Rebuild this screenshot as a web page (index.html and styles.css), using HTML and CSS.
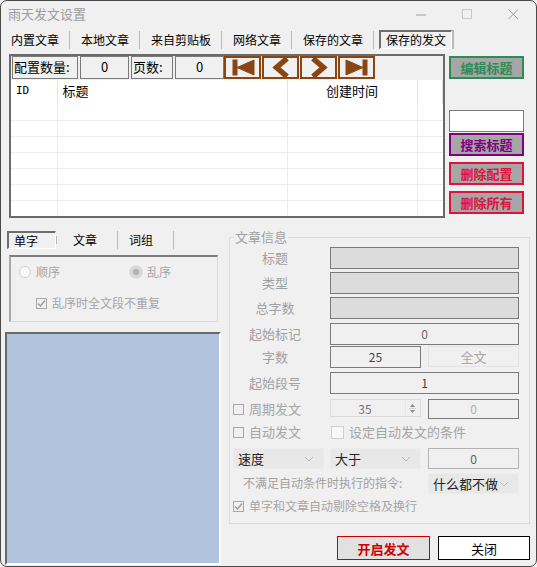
FILE: index.html
```html
<!DOCTYPE html>
<html lang="zh-CN">
<head>
<meta charset="UTF-8">
<title>雨天发文设置</title>
<link rel="stylesheet" href="styles.css">
</head>
<body>
<div class="window">

    <div class="titlebar">
        <span class="title">雨天发文设置</span>
        <div class="winctl">
            <span><svg width="11" height="11"><line x1="0" y1="6" x2="10" y2="6" stroke="#a0a0a0"/></svg></span>
            <span><svg width="11" height="11"><rect x="0.5" y="0.5" width="9" height="9" fill="none" stroke="#c8c8c8"/></svg></span>
            <span><svg width="11" height="11"><path d="M0.5 0.5 L10 10 M10 0.5 L0.5 10" stroke="#a0a0a0"/></svg></span>
        </div>
    </div>

    <div class="tabs">
        <span class="tab">内置文章</span>
        <span class="tab">本地文章</span>
        <span class="tab">来自剪贴板</span>
        <span class="tab">网络文章</span>
        <span class="tab">保存的文章</span>
        <span class="tab active">保存的发文</span>
    </div>

    <div class="main">
        <div class="listpanel">
            <div class="toprow">
                <span class="cell c-count">配置数量:</span>
                <span class="cell c-val">0</span>
                <span class="cell c-page">页数:</span>
                <span class="cell c-val">0</span>
                <div class="navs">
                    <button class="nav"><svg width="32" height="19"><rect x="6" y="2" width="4" height="15"/><polygon points="10,9.5 27,2 27,17"/></svg></button>
                    <button class="nav"><svg width="32" height="19"><polyline points="22,0.5 11.5,9.5 22,18.5" fill="none" stroke-width="5.5"/></svg></button>
                    <button class="nav"><svg width="32" height="19"><polyline points="10,0.5 20.5,9.5 10,18.5" fill="none" stroke-width="5.5"/></svg></button>
                    <button class="nav"><svg width="32" height="19"><polygon points="5,2 22,9.5 5,17"/><rect x="22" y="2" width="4" height="15"/></svg></button>
                </div>
            </div>
            <table class="grid">
                <tr class="head"><td class="mono">ID</td><td>标题</td><td class="center">创建时间</td><td></td></tr>
                <tr><td></td><td></td><td></td><td></td></tr>
                <tr><td></td><td></td><td></td><td></td></tr>
                <tr><td></td><td></td><td></td><td></td></tr>
                <tr><td></td><td></td><td></td><td></td></tr>
                <tr><td></td><td></td><td></td><td></td></tr>
                <tr><td></td><td></td><td></td><td></td></tr>
                <tr class="last"><td></td><td></td><td></td><td></td></tr>
            </table>
        </div>

        <div class="sidebtns">
            <button class="sbtn green">编辑标题</button>
            <input class="search" type="text">
            <button class="sbtn purple">搜索标题</button>
            <button class="sbtn red gap">删除配置</button>
            <button class="sbtn red gap">删除所有</button>
        </div>
    </div>

    <div class="lower">
        <div class="leftcol">
            <div class="subtabs">
                <span class="stab active">单字</span>
                <span class="stab">文章</span>
                <span class="stab">词组</span>
            </div>
            <div class="optbox">
                <div class="radios">
                    <span class="opt"><i class="radio"></i>顺序</span>
                    <span class="opt"><i class="radio on"></i>乱序</span>
                </div>
                <span class="opt chk-indent"><i class="check on"><svg width="9" height="9"><polyline points="1,4.5 3.5,7 8,1.5" fill="none" stroke="#9a9a9a" stroke-width="1.3"/></svg></i>乱序时全文段不重复</span>
            </div>
            <div class="preview"></div>
        </div>

        <div class="rightcol">
            <fieldset class="info">
                <legend>文章信息</legend>
                <div class="form">
                    <span class="lbl">标题</span><span class="field dark span3"></span>
                    <span class="lbl">类型</span><span class="field dark span3"></span>
                    <span class="lbl">总字数</span><span class="field dark span3"></span>
                    <span class="lbl">起始标记</span><span class="field span3 grey">0</span>
                    <span class="lbl">字数</span><span class="field">25</span><span class="flat">全文</span>
                    <span class="lbl">起始段号</span><span class="field span3">1</span>
                    <span class="opt lbl-left"><i class="check"></i>周期发文</span>
                    <span class="spin"><span class="spinval">35</span><span class="arrows"><svg width="9" height="13"><polygon points="4.5,2 7,5 2,5" fill="#8a8a8a"/><line x1="1" y1="6.5" x2="8" y2="6.5" stroke="#d0d0d0"/><polygon points="2,8 7,8 4.5,11" fill="#8a8a8a"/></svg></span></span>
                    <span class="field light">0</span>
                    <span class="opt lbl-left"><i class="check"></i>自动发文</span>
                    <span class="opt wide"><i class="check box"></i>设定自动发文的条件</span>
                    <span class="select first">速度<svg width="10" height="6"><polyline points="1,1 5,5 9,1" fill="none" stroke="#b8b8b8"/></svg></span>
                    <span class="select">大于<svg width="10" height="6"><polyline points="1,1 5,5 9,1" fill="none" stroke="#b8b8b8"/></svg></span>
                    <span class="field mid">0</span>
                    <span class="note">不满足自动条件时执行的指令:</span>
                    <span class="select">什么都不做<svg width="10" height="6"><polyline points="1,1 5,5 9,1" fill="none" stroke="#b8b8b8"/></svg></span>
                    <span class="opt full"><i class="check on"><svg width="9" height="9"><polyline points="1,4.5 3.5,7 8,1.5" fill="none" stroke="#9a9a9a" stroke-width="1.3"/></svg></i>单字和文章自动剔除空格及换行</span>
                </div>
            </fieldset>
            <div class="actions">
                <button class="btn-start">开启发文</button>
                <button class="btn-close">关闭</button>
            </div>
        </div>
    </div>

</div>
</body>
</html>
```

FILE: styles.css
```css
* {
    box-sizing: border-box;
}
body {
    margin: 0;
    background: #f0f0f0;
    font-family: "Noto Sans CJK SC", "Noto Sans", sans-serif;
    font-size: 12px;
    color: #000;
}
button, input {
    font-family: inherit;
    font-size: 12px;
    margin: 0;
    padding: 0;
}
.window {
    width: 537px;
    height: 567px;
    border: 1px solid #4a4a4a;
    border-radius: 7px;
    background: #f0f0f0;
    overflow: hidden;
}

/* title bar */
.titlebar {
    height: 26px;
    display: flex;
    align-items: center;
    justify-content: space-between;
    padding-left: 7px;
    color: #9c9c9c;
    line-height: 16px;
    font-size: 13px;
}
.winctl {
    display: flex;
}
.winctl span {
    width: 46px;
    display: flex;
    justify-content: center;
}

/* top tabs */
.tabs {
    display: flex;
    align-items: center;
    height: 23px;
    margin-top: 1px;
}
.tab {
    padding: 0 10px 0 11px;
    border-right: 1px solid #b9b9b9;
    line-height: 18px;
}
.tab:first-child {
    padding-left: 10px;
}
.tab.active {
    margin-left: 5px;
    padding: 0 5px;
    line-height: 16px;
    border-top: 2px solid #6e6e6e;
    border-left: 2px solid #6e6e6e;
    border-right: 1px solid #fff;
    border-bottom: 1px solid #fff;
    box-shadow: 2px 0 0 #b9b9b9;
}

/* list panel */
.main {
    display: flex;
    margin-top: 3px;
    padding-left: 8px;
}
.listpanel {
    width: 436px;
    height: 164px;
    border: 2px solid #6b6b6b;
    background: #fff;
    display: flex;
    flex-direction: column;
}
.toprow {
    display: flex;
    height: 24px;
    background: #f0f0f0;
    padding: 0 0 1px 1px;
    gap: 2px;
    align-items: stretch;
    font-size: 13px;
}
.cell {
    border: 1px solid #7a7a7a;
    line-height: 20px;
    text-align: center;
}
.c-count {
    width: 66px;
    text-align: left;
    padding-left: 1px;
}
.c-val {
    width: 49px;
}
.c-page {
    width: 42px;
    text-align: left;
    padding-left: 1px;
}
.navs {
    display: flex;
    gap: 1px;
    margin-left: -2px;
}
.nav {
    width: 37px;
    height: 23px;
    border: 2px solid #8b4513;
    background: #f0f0f0;
    display: flex;
    align-items: center;
    justify-content: center;
    fill: #8b4513;
    stroke: #8b4513;
}
.nav svg {
    display: block;
}
.grid {
    border-collapse: collapse;
    width: 100%;
    table-layout: fixed;
}
.grid td {
    height: 16px;
    padding: 0;
    border-bottom: 1px solid #ececec;
    border-right: 1px solid #ececec;
}
.grid td:nth-child(1) {
    width: 46px;
}
.grid td:nth-child(2) {
    width: 230px;
}
.grid td:nth-child(3) {
    width: 130px;
}
.grid td:last-child {
    border-right: none;
}
.grid .head td {
    height: 24px;
    border-bottom: none;
    border-right: 1px solid #e3e3e3;
    padding-left: 5px;
    vertical-align: top;
    line-height: 22px;
    font-size: 13px;
}
.grid .head td.center {
    text-align: center;
    padding-left: 0;
}
.grid .head td.mono {
    font-family: "DejaVu Sans Mono", "Liberation Mono", monospace;
    font-size: 11px;
}
.grid .last td {
    border-bottom: none;
}

/* side buttons */
.sidebtns {
    width: 75px;
    margin-left: 4px;
    display: flex;
    flex-direction: column;
    padding-top: 2px;
}
.sbtn {
    height: 23px;
    background: #a6a6a6;
    border: 2px solid;
    font-weight: bold;
    font-size: 13px;
    line-height: 18px;
}
.sbtn.green {
    color: #2e8b57;
    border-color: #2e8b57;
}
.sbtn.purple {
    color: #800080;
    border-color: #800080;
    margin-top: 1px;
}
.sbtn.red {
    color: #dc143c;
    border-color: #dc143c;
}
.sbtn.gap {
    margin-top: 6px;
}
.search {
    margin-top: 31px;
    height: 22px;
    border: 1px solid #7a7a7a;
    background: #fff;
}

/* lower part */
.lower {
    display: flex;
    margin-top: 8px;
    padding-left: 4px;
}
.leftcol {
    width: 216px;
    display: flex;
    flex-direction: column;
}
.subtabs {
    display: flex;
    align-items: center;
    height: 20px;
    margin-top: 4px;
}
.stab {
    padding: 0 20px 0 11px;
    line-height: 18px;
    border-right: 1px solid #b9b9b9;
}
.stab.active {
    margin-left: 2px;
    margin-right: 6px;
    padding: 0 17px 0 5px;
    border-top: 2px solid #6e6e6e;
    border-left: 2px solid #6e6e6e;
    border-right: 1px solid #fff;
    border-bottom: 1px solid #fff;
    line-height: 15px;
    box-shadow: 6px 0 0 -5px #b9b9b9;
}
.optbox {
    margin: 5px 0 0 4px;
    width: 209px;
    height: 67px;
    border: 1px solid #dadada;
    border-top: 2px solid #7c7c7c;
    border-left: 2px solid #a8a8a8;
    display: flex;
    flex-direction: column;
    padding: 6px 0 0 8px;
    color: #a5a5a5;
}
.radios {
    display: flex;
    gap: 70px;
}
.opt {
    display: flex;
    align-items: center;
    gap: 5px;
    color: #a5a5a5;
    line-height: 18px;
}
.chk-indent {
    margin: 13px 0 0 17px;
}
.radio {
    width: 12px;
    height: 12px;
    border-radius: 50%;
    border: 1px solid #cfcfcf;
    background: #fafafa;
}
.radio.on {
    border: 3px solid #d6d6d6;
    background: #b4b4b4;
    box-shadow: 0 0 0 1px #e4e4e4;
}
.check {
    width: 11px;
    height: 11px;
    border: 1px solid #a8a8a8;
    display: flex;
    align-items: center;
    justify-content: center;
}
.check.box {
    border-color: #d0d0d0;
    background: #f8f8f8;
    width: 13px;
    height: 13px;
}
.preview {
    margin-top: 10px;
    width: 216px;
    height: 233px;
    background: #b0c4de;
    border-top: 2px solid #6a6a6a;
    border-left: 2px solid #6a6a6a;
    border-right: 2px solid #fff;
    border-bottom: 2px solid #fff;
}

.rightcol {
    width: 301px;
    margin-left: 8px;
    display: flex;
    flex-direction: column;
}
.info {
    margin: 4px 0 0 0;
    padding: 3px 0 0 0;
    border: 1px solid #dcdcdc;
    height: 294px;
    min-width: 0;
}
.info legend {
    margin-left: 4px;
    padding: 0 1px;
    color: #a0a0a0;
    line-height: 14px;
    font-size: 13px;
}
.form {
    display: grid;
    grid-template-columns: 100px 91px 7px 91px;
    grid-template-rows: 25px 25px 26px 23px 26px 27px 23px 26px 25px 24px 22px;
    align-items: start;
}
.lbl {
    text-align: center;
    color: #a0a0a0;
    line-height: 22px;
    padding-right: 10px;
    font-size: 13px;
}
.field {
    height: 22px;
    border: 1px solid #7a7a7a;
    background: #f0f0f0;
    text-align: center;
    line-height: 19px;
    color: #444;
}
.field.dark {
    background: #dcdcdc;
}
.field.grey {
    color: #6a6a6a;
}
.field.light {
    grid-column: 4;
    height: 20px;
    color: #b0b0b0;
    line-height: 17px;
}
.field.mid {
    grid-column: 4;
    height: 21px;
    border-color: #b4b4b4;
    color: #606060;
}
.span3 {
    grid-column: 2 / 5;
}
.field:not(.span3):not(.light):not(.mid) {
    grid-column: 2;
}
.flat {
    grid-column: 4;
    height: 21px;
    border: 1px solid #e4e4e4;
    text-align: center;
    color: #a8a8a8;
    line-height: 19px;
    font-size: 13px;
}
.lbl-left {
    padding-left: 3px;
    height: 20px;
    font-size: 13px;
}
.spin {
    grid-column: 2;
    height: 18px;
    border: 1px solid #dadada;
    display: flex;
    align-items: center;
    color: #707070;
}
.spinval {
    flex: 1;
    text-align: center;
    padding-right: 6px;
}
.arrows {
    width: 13px;
    height: 16px;
    display: flex;
    align-items: center;
    justify-content: center;
    border-left: 1px solid #e6e6e6;
    margin-right: 2px;
}
.wide {
    grid-column: 2 / 5;
    padding-left: 1px;
    height: 20px;
    font-size: 13px;
}
.select {
    height: 21px;
    background: #e8e8e8;
    display: flex;
    align-items: center;
    justify-content: space-between;
    padding: 0 9px 0 4px;
    color: #222;
    border: 1px solid #ececec;
    font-size: 13px;
}
.select.first {
    grid-column: 1;
    margin: 0 6px 0 3px;
}
.select:nth-last-child(2) {
    grid-column: 4;
}
.note {
    grid-column: 1 / 4;
    color: #a0a0a0;
    padding-left: 13px;
    line-height: 20px;
}
.full {
    grid-column: 1 / 5;
    padding-left: 3px;
}
.actions {
    display: flex;
    justify-content: flex-end;
    gap: 8px;
    margin-top: 12px;
}
.btn-start {
    width: 93px;
    height: 24px;
    background: #e1e1e1;
    border: 1px solid #cc0000;
    color: #cc0000;
    font-weight: bold;
    font-size: 13px;
}
.btn-close {
    width: 92px;
    height: 24px;
    background: #fff;
    border: 1px solid #000;
    font-size: 13px;
}
```
